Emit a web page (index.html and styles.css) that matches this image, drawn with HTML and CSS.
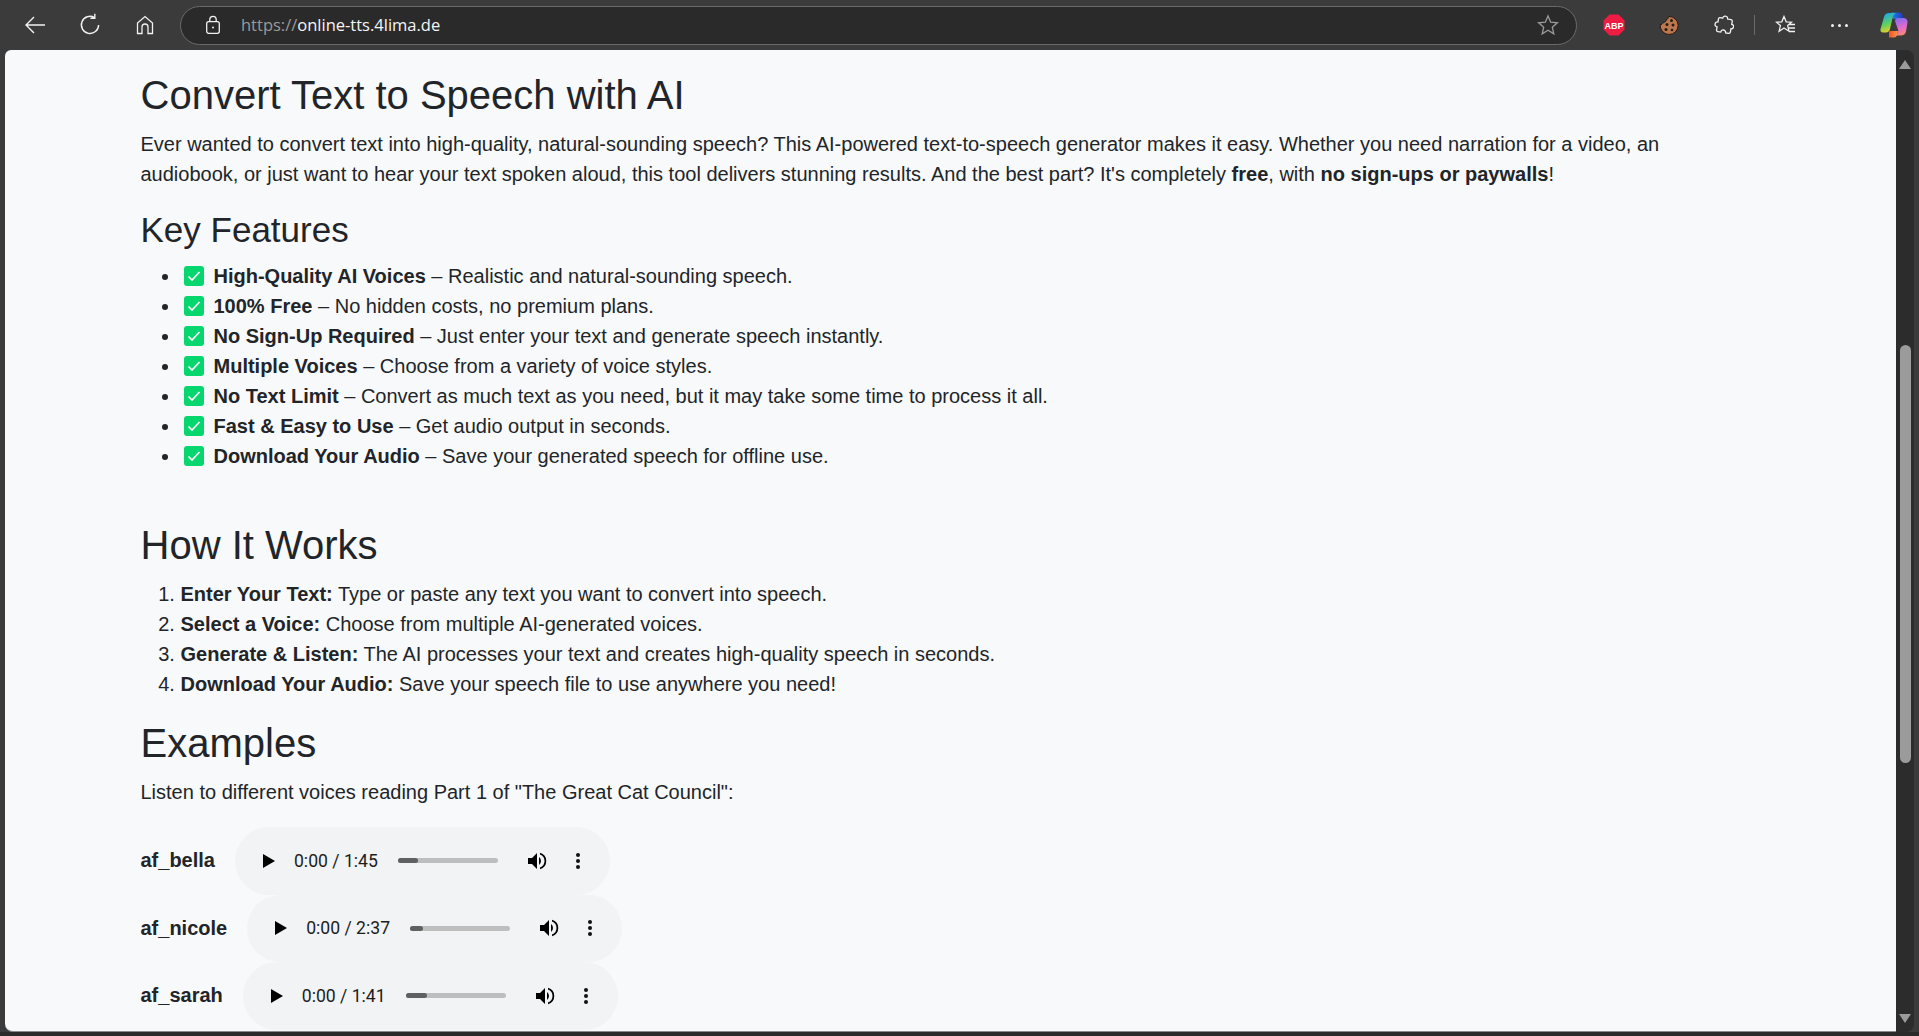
FILE: index.html
```html
<!DOCTYPE html>
<html lang="en">
<head>
    <meta charset="UTF-8">
    <title>Online TTS</title>
    <link rel="stylesheet" href="styles.css">
</head>
<body>
    <div class="toolbar">
        <button class="tool-btn back-btn" aria-label="Back">
            <svg width="24" height="24" viewBox="0 0 24 24" fill="none" stroke="#f2f2f2" stroke-width="1.4"><path d="M22 12H3M11 4l-8 8 8 8"/></svg>
        </button>
        <button class="tool-btn reload-btn" aria-label="Reload">
            <svg width="24" height="24" viewBox="0 0 24 24" fill="none" stroke="#f2f2f2" stroke-width="1.4"><path d="M16.5 4.6A8.6 8.6 0 1 0 20.6 12M16.8 0.8v4.4h-4.4"/></svg>
        </button>
        <button class="tool-btn home-btn" aria-label="Home">
            <svg width="22" height="22" viewBox="0 0 22 22" fill="none" stroke="#f2f2f2" stroke-width="1.3"><path d="M3.5 19.5V9L11 2.5 18.5 9v10.500h-4.500V13a3 3 0 0 0-6 0v6.500z"/></svg>
        </button>
        <div class="address-bar">
            <svg class="lock" width="18" height="20" viewBox="0 0 18 20" fill="none" stroke="#f2f2f2" stroke-width="1.3"><rect x="2.7" y="6.7" width="12.6" height="11.6" rx="2"/><path d="M5.800 6.500V4.500a3.200 3.200 0 0 1 6.400 0v2"/><circle cx="9" cy="12.5" r="1" fill="#f2f2f2" stroke="none"/></svg>
            <span class="url"><span class="url-scheme">https://</span>online-tts.4lima.de</span>
            <svg class="star" width="22" height="22" viewBox="0 0 22 22" fill="none" stroke="#9a9a9a" stroke-width="1.3"><path d="M11 2l2.700 6.200 6.700.6-5.100 4.400 1.500 6.600L11 16.300l-5.800 3.500 1.500-6.600L1.600 8.800l6.700-.6z"/></svg>
        </div>
        <div class="ext-icons">
            <svg class="abp" width="22" height="22" viewBox="0 0 22 22"><polygon points="6.5,0.5 15.5,0.5 21.5,6.5 21.5,15.5 15.5,21.5 6.5,21.5 0.5,15.5 0.5,6.5" fill="#ee1b43"/><text x="11" y="14.5" text-anchor="middle" class="abp-text">ABP</text></svg>
            <svg class="cookie" width="20" height="20" viewBox="0 0 20 20"><path d="M9.500 1.500A9 9 0 1 1 1.200 9.500c1.500.3 2.500-.5 3-2 1.500 0 2.800-.8 3-2.500 1.300-.5 2.300-2 2.300-3.500z" fill="#bb7850" stroke="#2a1a10"/><circle cx="12.5" cy="5.5" r="1.5" fill="#2a1a10"/><circle cx="8" cy="9.500" r="1.500" fill="#2a1a10"/><circle cx="14" cy="10" r="1.500" fill="#2a1a10"/><circle cx="7" cy="14.500" r="1.500" fill="#2a1a10"/><circle cx="13" cy="15" r="1.300" fill="#2a1a10"/></svg>
            <svg class="puzzle" width="20" height="20" viewBox="0 0 20 20" fill="none" stroke="#f2f2f2" stroke-width="1.3"><path d="M7.500 3.500a2.500 2.500 0 0 1 5 0h3.500a1.500 1.500 0 0 1 1.500 1.500v3a2.200 2.200 0 0 1 0 4.500v3.500a1.500 1.500 0 0 1-1.500 1.500h-3a2.500 2.500 0 0 0-5 0H5a1.500 1.500 0 0 1-1.500-1.500v-3a2.500 2.500 0 0 1 0-5V5A1.500 1.500 0 0 1 5 3.500z" transform="rotate(10 10 10)"/></svg>
            <span class="tool-sep"></span>
            <svg class="favs" width="22" height="22" viewBox="0 0 22 22" fill="none" stroke="#f2f2f2" stroke-width="1.3"><path d="M9 2.500l2.200 5.300 5.300.4-3.800 3.400 1.200 5.600L9 14l-4.900 3.200 1.300-5.600L1.500 8.200l5.300-.4zM14 10.500h6M13.500 14h6.500M14 17.500h6"/></svg>
            <span class="more-dots"><i></i><i></i><i></i></span>
            <svg class="copilot" width="28" height="26" viewBox="0 0 28 26">
                <defs>
                    <linearGradient id="copLeft" x1="0.3" y1="0" x2="0.6" y2="1"><stop offset="0" stop-color="#19a5f5"/><stop offset=".55" stop-color="#5fd15b"/><stop offset="1" stop-color="#f7d025"/></linearGradient>
                    <linearGradient id="copRight" x1="0.5" y1="0" x2="0.7" y2="1"><stop offset="0" stop-color="#8d6bee"/><stop offset=".55" stop-color="#e76bc7"/><stop offset="1" stop-color="#f58b6a"/></linearGradient>
                    <linearGradient id="copTop" x1="0" y1="0" x2="1" y2="0"><stop offset="0" stop-color="#1a8be0"/><stop offset="1" stop-color="#2536c8"/></linearGradient>
                    <linearGradient id="copBot" x1="0" y1="0" x2="1" y2="0"><stop offset="0" stop-color="#f2502a"/><stop offset="1" stop-color="#f79a3c"/></linearGradient>
                </defs>
                <path d="M11 0.500h8c2 0 3 1.200 3.500 3L23 7H13z" fill="url(#copTop)"/>
                <path d="M9 19h9l-1 4c-.5 1.700-1.500 2.500-3 2.500H9z" fill="url(#copBot)"/>
                <path d="M9 1h7c-2 1-3 2.500-3.500 5L10 17c-.5 2-2 3.500-4 3.500H3c-2 0-3-1.700-2.500-3.500L4 5C4.700 2.500 6.500 1 9 1z" fill="url(#copLeft)"/>
                <path d="M17 6h6c3 0 5 2 4.500 4.500l-1.500 9c-.5 2.500-2.500 4-5 4h-6c2-1 3-3 3.300-5L15 9c.2-1.300 1-2.500 2-3z" fill="url(#copRight)"/>
            </svg>
        </div>
    </div>

    <div class="browser-body">
        <main class="page">
            <div class="content">
                <h1>Convert Text to Speech with AI</h1>
                <p class="intro">Ever wanted to convert text into high-quality, natural-sounding speech? This AI-powered text-to-speech generator makes it easy. Whether you need narration for a video, an audiobook, or just want to hear your text spoken aloud, this tool delivers stunning results. And the best part? It's completely <strong>free</strong>, with <strong>no sign-ups or paywalls</strong>!</p>

                <h2>Key Features</h2>
                <ul class="features">
                    <li><span class="check"><svg width="14" height="14" viewBox="0 0 14 14" fill="none" stroke="#fff" stroke-width="1.700"><path d="M1.500 7.500l3.500 3.500 7.500-8"/></svg></span><strong>High-Quality AI Voices</strong> – Realistic and natural-sounding speech.</li>
                    <li><span class="check"><svg width="14" height="14" viewBox="0 0 14 14" fill="none" stroke="#fff" stroke-width="1.700"><path d="M1.500 7.500l3.500 3.500 7.500-8"/></svg></span><strong>100% Free</strong> – No hidden costs, no premium plans.</li>
                    <li><span class="check"><svg width="14" height="14" viewBox="0 0 14 14" fill="none" stroke="#fff" stroke-width="1.700"><path d="M1.500 7.500l3.500 3.500 7.500-8"/></svg></span><strong>No Sign-Up Required</strong> – Just enter your text and generate speech instantly.</li>
                    <li><span class="check"><svg width="14" height="14" viewBox="0 0 14 14" fill="none" stroke="#fff" stroke-width="1.700"><path d="M1.500 7.500l3.500 3.500 7.500-8"/></svg></span><strong>Multiple Voices</strong> – Choose from a variety of voice styles.</li>
                    <li><span class="check"><svg width="14" height="14" viewBox="0 0 14 14" fill="none" stroke="#fff" stroke-width="1.700"><path d="M1.500 7.500l3.500 3.500 7.500-8"/></svg></span><strong>No Text Limit</strong> – Convert as much text as you need, but it may take some time to process it all.</li>
                    <li><span class="check"><svg width="14" height="14" viewBox="0 0 14 14" fill="none" stroke="#fff" stroke-width="1.700"><path d="M1.500 7.500l3.500 3.500 7.500-8"/></svg></span><strong>Fast &amp; Easy to Use</strong> – Get audio output in seconds.</li>
                    <li><span class="check"><svg width="14" height="14" viewBox="0 0 14 14" fill="none" stroke="#fff" stroke-width="1.700"><path d="M1.500 7.500l3.500 3.500 7.500-8"/></svg></span><strong>Download Your Audio</strong> – Save your generated speech for offline use.</li>
                </ul>

                <h1 class="how-title">How It Works</h1>
                <ol class="steps">
                    <li><strong>Enter Your Text:</strong> Type or paste any text you want to convert into speech.</li>
                    <li><strong>Select a Voice:</strong> Choose from multiple AI-generated voices.</li>
                    <li><strong>Generate &amp; Listen:</strong> The AI processes your text and creates high-quality speech in seconds.</li>
                    <li><strong>Download Your Audio:</strong> Save your speech file to use anywhere you need!</li>
                </ol>

                <h1 class="examples-title">Examples</h1>
                <p class="examples-intro">Listen to different voices reading Part 1 of "The Great Cat Council":</p>

                <div class="voice-list">
                    <div class="voice-row">
                        <strong class="voice-name">af_bella</strong>
                        <div class="player">
                            <svg class="play" width="12" height="14" viewBox="0 0 12 14"><path d="M0 0l12 7-12 7z"/></svg>
                            <span class="time">0:00 / 1:45</span>
                            <span class="track"><span class="track-fill fill-bella"></span></span>
                            <svg class="volume" width="20" height="20" viewBox="0 0 20 20"><path d="M1 7v6h4l5 5V2L5 7z"/><path d="M12 6a5 5 0 0 1 0 8z"/><path d="M13 1.800a8.500 8.500 0 0 1 0 16.400v-1.800a6.800 6.800 0 0 0 0-12.800z"/></svg>
                            <span class="menu-dots"><i></i><i></i><i></i></span>
                        </div>
                    </div>
                    <div class="voice-row">
                        <strong class="voice-name">af_nicole</strong>
                        <div class="player">
                            <svg class="play" width="12" height="14" viewBox="0 0 12 14"><path d="M0 0l12 7-12 7z"/></svg>
                            <span class="time">0:00 / 2:37</span>
                            <span class="track"><span class="track-fill fill-nicole"></span></span>
                            <svg class="volume" width="20" height="20" viewBox="0 0 20 20"><path d="M1 7v6h4l5 5V2L5 7z"/><path d="M12 6a5 5 0 0 1 0 8z"/><path d="M13 1.800a8.500 8.500 0 0 1 0 16.400v-1.800a6.800 6.800 0 0 0 0-12.800z"/></svg>
                            <span class="menu-dots"><i></i><i></i><i></i></span>
                        </div>
                    </div>
                    <div class="voice-row">
                        <strong class="voice-name">af_sarah</strong>
                        <div class="player">
                            <svg class="play" width="12" height="14" viewBox="0 0 12 14"><path d="M0 0l12 7-12 7z"/></svg>
                            <span class="time">0:00 / 1:41</span>
                            <span class="track"><span class="track-fill fill-sarah"></span></span>
                            <svg class="volume" width="20" height="20" viewBox="0 0 20 20"><path d="M1 7v6h4l5 5V2L5 7z"/><path d="M12 6a5 5 0 0 1 0 8z"/><path d="M13 1.800a8.500 8.500 0 0 1 0 16.400v-1.800a6.800 6.800 0 0 0 0-12.800z"/></svg>
                            <span class="menu-dots"><i></i><i></i><i></i></span>
                        </div>
                    </div>
                </div>
            </div>
        </main>
        <div class="scrollbar">
            <span class="arrow-up"></span>
            <div class="scroll-track"><div class="scroll-thumb"></div></div>
            <span class="arrow-down"></span>
        </div>
    </div>
</body>
</html>
```

FILE: styles.css
```css
html, body {
    height: 100%;
    margin: 0;
}

body {
    display: flex;
    flex-direction: column;
    height: 1036px;
    box-sizing: border-box;
    overflow: hidden;
    background-color: #3b3b3b;
    border-bottom: 4px solid #2a2a2a;
    font-family: "Liberation Sans", Arial, sans-serif;
    color: #212529;
}

/* browser toolbar */
.toolbar {
    display: flex;
    align-items: center;
    height: 50px;
    flex-shrink: 0;
    padding-left: 23px;
    box-sizing: border-box;
}

.tool-btn {
    display: flex;
    align-items: center;
    justify-content: center;
    padding: 0;
    border: none;
    background: none;
    width: 24px;
    height: 24px;
}

.reload-btn {
    margin-left: 31px;
}

.home-btn {
    margin-left: 31px;
}

.address-bar {
    display: flex;
    align-items: center;
    width: 1397px;
    height: 39px;
    margin-left: 23px;
    padding: 0 17px 0 23px;
    box-sizing: border-box;
    background-color: #2a2a2a;
    border: 1px solid #6a6a6a;
    border-radius: 20px;
}

.url {
    margin: 0 0 2px 19px;
    flex: 1;
    font-family: "Open Sans", sans-serif;
    font-size: 16.5px;
    color: #f5f5f5;
}

.url-scheme {
    color: #9a9a9a;
}

.ext-icons {
    display: flex;
    align-items: center;
    margin-left: 26px;
}

.abp-text {
    font-family: "Liberation Sans", sans-serif;
    font-size: 9px;
    font-weight: 700;
    fill: #fff;
}

.cookie {
    margin-left: 34px;
}

.puzzle {
    margin-left: 35px;
}

.tool-sep {
    width: 1px;
    height: 20px;
    margin-left: 20px;
    background-color: #6a6a6a;
}

.favs {
    margin-left: 20px;
}

.more-dots {
    display: flex;
    gap: 4px;
    margin-left: 34px;
}

.more-dots i {
    width: 3px;
    height: 3px;
    border-radius: 50%;
    background-color: #f2f2f2;
}

.copilot {
    margin-left: 32px;
}

/* page area */
.browser-body {
    display: flex;
    flex: 1;
    min-height: 0;
    margin: 0 5px;
}

.page {
    flex: 1;
    min-width: 0;
    overflow: hidden;
    background-color: #f8f9fa;
    border-top-left-radius: 6px;
    border-bottom-left-radius: 8px;
    border-bottom: 1px solid #8a8a8a;
}

.content {
    width: 1700px;
    padding: 21px 0 0 135.5px;
    box-sizing: border-box;
}

h1 {
    margin: 0;
    font-size: 40px;
    font-weight: 500;
    line-height: 48px;
}

h2 {
    margin: 0;
    font-size: 35px;
    font-weight: 500;
    line-height: 42px;
}

p {
    margin: 0;
}

.intro {
    margin-top: 10px;
    font-size: 20px;
    line-height: 30px;
}

.intro + h2 {
    margin-top: 20px;
}

.features {
    margin: 10px 0 0;
    padding-left: 40px;
    font-size: 20px;
    line-height: 30px;
}

.check {
    display: inline-flex;
    align-items: center;
    justify-content: center;
    width: 20px;
    height: 20px;
    margin: 0 10px 0 3px;
    background-color: #06d66e;
    border-radius: 3px;
}

.how-title {
    margin-top: 50px;
}

.steps {
    margin: 10px 0 0;
    padding-left: 40px;
    font-size: 20px;
    line-height: 30px;
}

.examples-title {
    margin-top: 20px;
}

.examples-intro {
    margin-top: 10px;
    font-size: 20px;
    line-height: 30px;
}

/* voice samples */
.voice-list {
    margin-top: 20px;
}

.voice-row {
    display: flex;
    align-items: center;
    gap: 20px;
}

.voice-name {
    font-size: 20px;
}

.player {
    display: flex;
    align-items: center;
    width: 375px;
    height: 67.6px;
    box-sizing: border-box;
    padding-left: 28px;
    background-color: #f1f3f4;
    border-radius: 34px;
    font-family: Roboto, sans-serif;
    font-size: 17.6px;
    color: #1d1d1d;
}

.time {
    margin-left: 19px;
    width: 104px;
}

.track {
    width: 100px;
    height: 5px;
    border-radius: 3px;
    background-color: #bdbebd;
}

.track-fill {
    display: block;
    height: 100%;
    border-radius: 3px;
    background-color: #5f6060;
}

.fill-bella {
    width: 20%;
}

.fill-nicole {
    width: 13%;
}

.fill-sarah {
    width: 21%;
}

.volume {
    margin-left: 29px;
}

.menu-dots {
    display: flex;
    flex-direction: column;
    gap: 2px;
    margin-left: 29px;
}

.menu-dots i {
    width: 4px;
    height: 4px;
    border-radius: 50%;
    background-color: #111;
}

/* scrollbar */
.scrollbar {
    display: flex;
    flex-direction: column;
    align-items: center;
    width: 18px;
    background-color: #2c2c2c;
    border-top-right-radius: 8px;
    border-bottom-right-radius: 8px;
}

.arrow-up, .arrow-down {
    width: 0;
    height: 0;
    flex-shrink: 0;
    border-left: 6.5px solid transparent;
    border-right: 6.5px solid transparent;
}

.arrow-up {
    margin-top: 10px;
    border-bottom: 9px solid #9b9b9b;
}

.arrow-down {
    margin-bottom: 9px;
    border-top: 9px solid #9b9b9b;
}

.scroll-track {
    flex: 1;
    width: 100%;
    padding-top: 276px;
    box-sizing: border-box;
}

.scroll-thumb {
    width: 11px;
    height: 418px;
    margin: 0 auto;
    border-radius: 5.5px;
    background-color: #9b9b9b;
}
```
